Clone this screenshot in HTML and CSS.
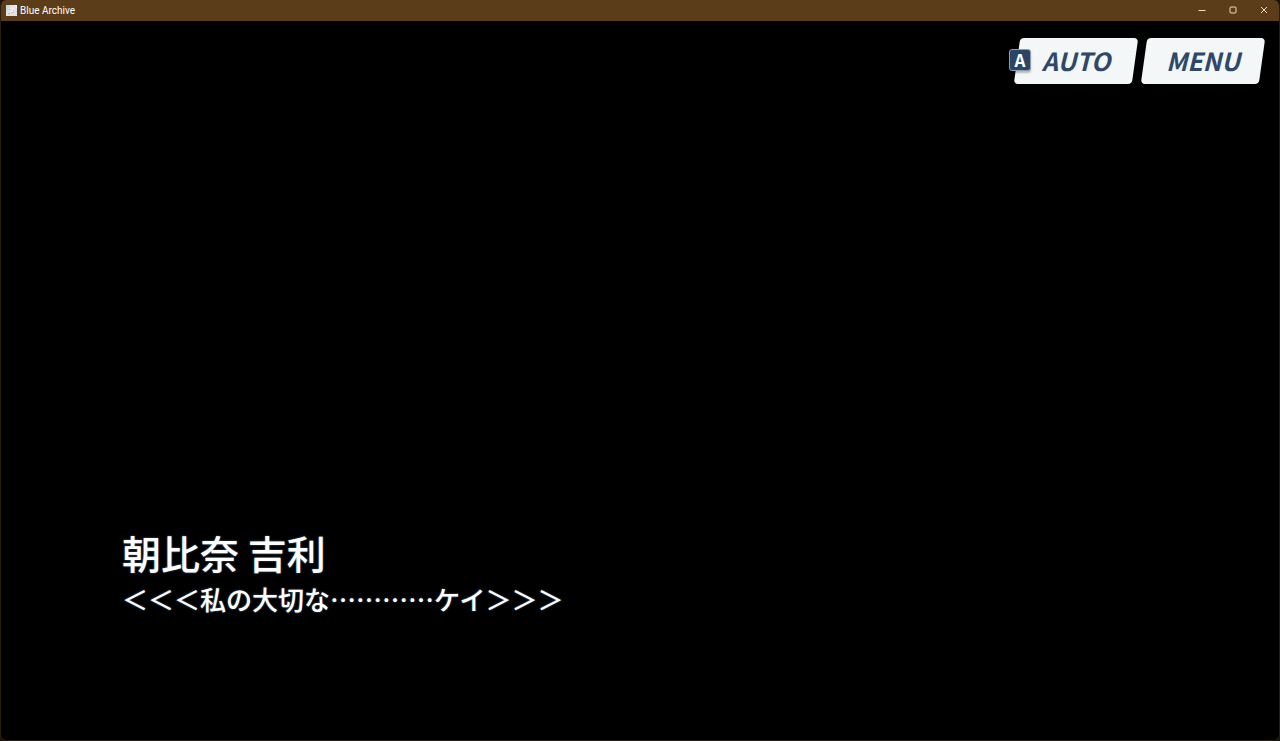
FILE: index.html
```html
<!DOCTYPE html>
<html lang="ja">
<head>
    <meta charset="UTF-8">
    <meta name="viewport" content="width=device-width, initial-scale=1.0">
    <title>Blue Archive</title>
    <link rel="stylesheet" href="styles.css">
</head>
<body>

<div class="window">
    <header class="titlebar">
        <svg class="app-icon" viewBox="0 0 11 11" aria-hidden="true">
            <rect width="11" height="11" fill="#dfe3e2"/>
            <path d="M0 0h4L2 4 0 6z" fill="#c5dbe0"/>
            <path d="M4 3l3-1 2 2-1 3-3 1-2-2z" fill="#f3edf0"/>
            <path d="M3 4l2 1M7 5l1 1M5 8l3-1M2 9l2-1" stroke="#b9a9b8" stroke-width=".8"/>
            <path d="M9 0h2v4z" fill="#fff"/>
        </svg>
        <span class="app-title">Blue Archive</span>
        <div class="window-controls">
            <button type="button" aria-label="Minimize">
                <svg viewBox="0 0 8 8"><path d="M.5 4.5h7"/></svg>
            </button>
            <button type="button" aria-label="Maximize">
                <svg viewBox="0 0 8 8"><rect x="1" y="1" width="6" height="6" rx="1"/></svg>
            </button>
            <button type="button" aria-label="Close">
                <svg viewBox="0 0 8 8"><path d="M1 1l6 6M7 1L1 7"/></svg>
            </button>
        </div>
    </header>

    <main class="stage">
        <div class="actions">
            <button type="button" class="action"><span class="key">A</span>AUTO</button>
            <button type="button" class="action">MENU</button>
        </div>
        <div class="dialogue">
            <h1 class="speaker">朝比奈 吉利</h1>
            <p class="line">＜＜＜私の大切な…………ケイ＞＞＞</p>
        </div>
    </main>
</div>

</body>
</html>
```
FILE: styles.css
```css
* {
    box-sizing: border-box;
}
body {
    margin: 0;
    background: #1c1408;
    font-family: "Noto Sans CJK JP", sans-serif;
}
button {
    border: none;
    background: none;
    padding: 0;
    font-family: inherit;
    cursor: pointer;
}
.window {
    display: flex;
    flex-direction: column;
    min-height: 100vh;
    border: 1px solid #2b1d0b;
    border-top: none;
    border-radius: 6px;
    background: #000;
    overflow: hidden;
}

/* Title bar */
.titlebar {
    display: flex;
    align-items: center;
    height: 21px;
    padding: 0 1px 1px 5px;
    margin: 0 -1px;
    background: #5b3e19;
    color: #fff;
}
.app-icon {
    width: 11px;
    height: 11px;
    margin: 0 3px 0 1px;
}
.app-title {
    padding-top: 2px;
    font-family: Roboto, sans-serif;
    font-size: 10px;
    line-height: 18px;
}
.window-controls {
    display: flex;
    height: 100%;
    margin-left: auto;
}
.window-controls button {
    display: flex;
    align-items: center;
    justify-content: center;
    width: 31px;
}
.window-controls svg {
    width: 8px;
    height: 8px;
    fill: none;
    stroke: #efdcc2;
    stroke-width: 1;
}

/* Game screen */
.stage {
    display: flex;
    flex: 1;
    flex-direction: column;
    justify-content: space-between;
    padding: 17px 17px 122px 121px;
}
.actions {
    display: flex;
    justify-content: flex-end;
    gap: 9px;
}
.action {
    position: relative;
    z-index: 0;
    width: 118px;
    height: 46px;
    padding-bottom: 2px;
    font-size: 25px;
    font-style: italic;
    font-weight: 700;
    line-height: 44px;
    color: #2f4768;
}
.action::before {
    content: "";
    position: absolute;
    inset: 0;
    z-index: -1;
    border-radius: 4px;
    background: #f3f7f8;
    transform: skewX(-8deg);
}
.key {
    position: absolute;
    top: 11px;
    left: -8px;
    width: 22px;
    height: 22px;
    border: 1px solid #8e9db0;
    border-radius: 3px;
    background: #2c4565;
    box-shadow: 0 2px 2px rgba(0, 0, 0, 0.25);
    color: #fff;
    font-size: 17px;
    font-style: normal;
    line-height: 19px;
}

/* Dialogue */
.dialogue {
    color: #fff;
    font-weight: 500;
    text-shadow: 0 0 2px #56789c;
}
.speaker {
    margin: 0 0 2px;
    font-size: 39px;
    font-weight: 500;
    line-height: 52px;
}
.line {
    margin: 0;
    font-size: 26px;
    line-height: 38px;
}
```
